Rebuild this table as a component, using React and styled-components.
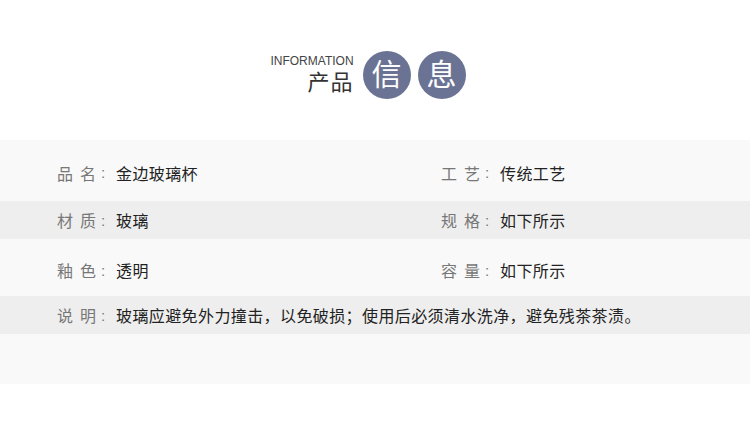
import React from 'react';
import styled, { createGlobalStyle } from 'styled-components';

const GlobalStyle = createGlobalStyle`
    body{
        margin:0;
        background:#fff;
        font-family:"Liberation Sans","Noto Sans CJK SC",sans-serif;
    }
`;

const rows = [
    { left: ['品名', '金边玻璃杯'], right: ['工艺', '传统工艺'], tall: true },
    { left: ['材质', '玻璃'], right: ['规格', '如下所示'], grey: true },
    { left: ['釉色', '透明'], right: ['容量', '如下所示'], tall: true },
];

function Field({ name, value }) {
    return (
        <Cell>
            <Label>
                {name.split('').map((c, i) => (
                    <span className="ch" key={i}>{c}</span>
                ))}
                <span className="colon">:</span>
            </Label>
            <Value>{value}</Value>
        </Cell>
    );
}

function App() {
    return (
        <Page>
            <GlobalStyle />
            <Header>
                <TitleText>
                    <span className="en">INFORMATION</span>
                    <span className="cn">产品</span>
                </TitleText>
                <Circle>信</Circle>
                <Circle>息</Circle>
            </Header>
            <Table>
                {rows.map((r, i) => (
                    <Row key={i} $grey={r.grey} $tall={r.tall}>
                        <Field name={r.left[0]} value={r.left[1]} />
                        <Field name={r.right[0]} value={r.right[1]} />
                    </Row>
                ))}
                <Row $grey>
                    <Field name="说明" value="玻璃应避免外力撞击，以免破损；使用后必须清水洗净，避免残茶茶渍。" />
                </Row>
                <Spacer />
            </Table>
        </Page>
    );
}

const Page = styled.div`
    width:750px;
    height:442px;
    background:#fff;
    overflow:hidden;
`;

const Header = styled.div`
    height:140px;
    display:flex;
    align-items:center;
    justify-content:center;
    padding-top:10px;
    padding-right:14px;
    box-sizing:border-box;
    gap:7px;
`;

const TitleText = styled.div`
    display:flex;
    flex-direction:column;
    align-items:flex-end;
    margin-right:2px;
    .en{
        font-size:12px;
        line-height:14px;
        color:#444;
    }
    .cn{
        font-size:22px;
        line-height:26px;
        letter-spacing:1px;
        margin-top:2px;
        color:#333;
    }
`;

const Circle = styled.div`
    width:48px;
    height:48px;
    border-radius:50%;
    background:#6b7394;
    color:#fff;
    display:flex;
    align-items:center;
    justify-content:center;
    font-size:30px;
    line-height:1;
`;

const Table = styled.div`
    background:#f9f9f9;
`;

const Row = styled.div`
    display:flex;
    align-items:center;
    box-sizing:border-box;
    height:${p => (p.$tall ? '61px' : '38px')};
    ${p => p.$tall && 'padding-top:4px;'}
    background:${p => (p.$grey ? '#eeeeee' : '#f9f9f9')};
    padding-left:57px;
    &:nth-child(3){ height:57px; padding-top:5px; }
`;

const Cell = styled.div`
    flex:none;
    width:384px;
    display:flex;
    align-items:center;
    font-size:16px;
    white-space:nowrap;
    &:last-child{ flex:1; width:auto; }
`;

const Label = styled.span`
    color:#777;
    width:59px;
    flex:none;
    display:flex;
    align-items:center;
    .ch + .ch{
        margin-left:7px;
    }
    .colon{
        margin-left:5px;
        font-size:15px;
    }
`;

const Value = styled.span`
    color:#222;
    letter-spacing:0.4px;
`;

const Spacer = styled.div`
    height:50px;
`;

export default App;
